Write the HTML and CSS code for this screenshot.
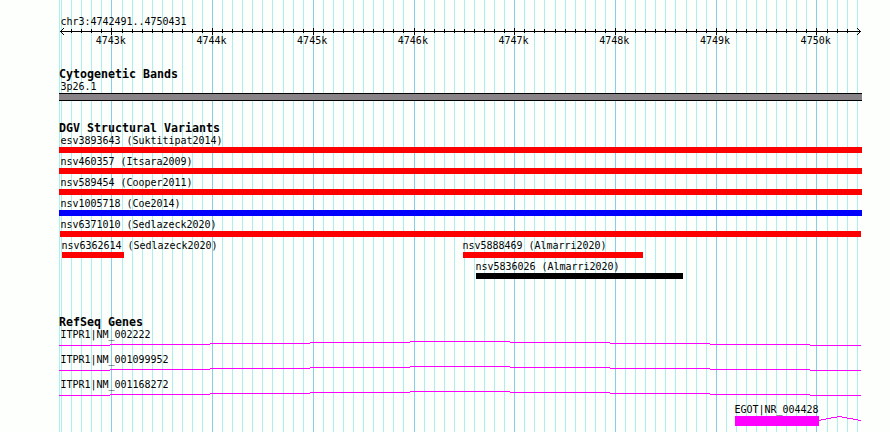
FILE: index.html
```
<!DOCTYPE html>
<html lang="en">
<head>
  <meta charset="UTF-8">
  <title>chr3:4742491..4750431</title>
  <link rel="stylesheet" href="styles.css">
</head>
<body>

  <div class="browser">
    <!-- grid lines, every 100 bp and every 1 kb -->
    <svg class="grid" width="890" height="432" shape-rendering="crispEdges">
      <path class="minor" d="M59 216H60M61 216H112M122 216H273M283 216H404M414 216H545M555 216H676M686 216H817M827 216H858"/>
      <path class="major" d="M111.5 0V432M212.5 0V432M313.5 0V432M414.5 0V432M514.5 0V432M615.5 0V432M716.5 0V432M816.5 0V432"/>
    </svg>

    <div class="content">
      <div class="label">chr3:4742491..4750431</div>
      <svg class="ruler" viewBox="59 28 803 7" width="803" height="7" shape-rendering="crispEdges">
        <path class="axis" d="M60 31.5H861M111.5 28V35M212.5 28V35M313.5 28V35M414.5 28V35M514.5 28V35M615.5 28V35M716.5 28V35M816.5 28V35"/>
        <path class="ticks" d="M71 31H112M122 31H273M283 31H404M414 31H545M555 31H676M686 31H817M827 31H848"/>
        <path class="arrow" d="M61 30h1v1h-1zM62 29h1v1h-1zM63 28h1v1h-1zM61 32h1v1h-1zM62 33h1v1h-1zM63 34h1v1h-1zM859 30h1v1h-1zM858 29h1v1h-1zM857 28h1v1h-1zM859 32h1v1h-1zM858 33h1v1h-1zM857 34h1v1h-1z"/>
      </svg>
      <div class="scale">
        <span>4743k</span>
        <span>4744k</span>
        <span>4745k</span>
        <span>4746k</span>
        <span>4747k</span>
        <span>4748k</span>
        <span>4749k</span>
        <span>4750k</span>
      </div>

      <h2>Cytogenetic Bands</h2>
      <div class="label">3p26.1</div>
      <div class="band"></div>

      <h2>DGV Structural Variants</h2>
      <div class="variant">
        <div class="label">esv3893643 (Suktitipat2014)</div>
        <div class="bar loss"></div>
      </div>
      <div class="variant">
        <div class="label">nsv460357 (Itsara2009)</div>
        <div class="bar loss"></div>
      </div>
      <div class="variant">
        <div class="label">nsv589454 (Cooper2011)</div>
        <div class="bar loss"></div>
      </div>
      <div class="variant">
        <div class="label">nsv1005718 (Coe2014)</div>
        <div class="bar gain"></div>
      </div>
      <div class="variant">
        <div class="label">nsv6371010 (Sedlazeck2020)</div>
        <div class="bar loss inset"></div>
      </div>
      <div class="lane">
        <div class="variant short first">
          <div class="label">nsv6362614 (Sedlazeck2020)</div>
          <div class="bar loss" style="width: 62px"></div>
        </div>
        <div class="variant short">
          <div class="label">nsv5888469 (Almarri2020)</div>
          <div class="bar loss" style="width: 180px"></div>
        </div>
      </div>
      <div class="lane">
        <div class="variant short last">
          <div class="label">nsv5836026 (Almarri2020)</div>
          <div class="bar other" style="width: 207px"></div>
        </div>
      </div>

      <h2 class="genes-title">RefSeq Genes</h2>
      <div class="gene">
        <div class="label">ITPR1|NM_002222</div>
        <svg viewBox="59 341 803 5" width="803" height="5" shape-rendering="crispEdges">
          <path class="intron" d="M59 345.5H110M110 344.5H210M210 343.5H310M310 342.5H410M410 341.5H510M510 342.5H610M610 343.5H710M710 344.5H810M810 345.5H861"/>
        </svg>
      </div>
      <div class="gene">
        <div class="label">ITPR1|NM_001099952</div>
        <svg viewBox="59 341 803 5" width="803" height="5" shape-rendering="crispEdges">
          <path class="intron" d="M59 345.5H110M110 344.5H210M210 343.5H310M310 342.5H410M410 341.5H510M510 342.5H610M610 343.5H710M710 344.5H810M810 345.5H861"/>
        </svg>
      </div>
      <div class="gene">
        <div class="label">ITPR1|NM_001168272</div>
        <svg viewBox="59 341 803 5" width="803" height="5" shape-rendering="crispEdges">
          <path class="intron" d="M59 345.5H110M110 344.5H210M210 343.5H310M310 342.5H410M410 341.5H510M510 342.5H610M610 343.5H710M710 344.5H810M810 345.5H861"/>
        </svg>
      </div>
      <div class="gene egot">
        <div class="label">EGOT|NR_004428</div>
        <div class="model">
          <div class="exon"></div>
          <svg viewBox="819 416 42 10" width="42" height="10" shape-rendering="crispEdges">
            <path class="intron" d="M819 420.5H821M821 419.5H826M826 418.5H831M831 417.5H837M837 416.5H842M842 417.5H847M847 418.5H853M853 419.5H858M858 420.5H861"/>
          </svg>
        </div>
      </div>
    </div>
  </div>

</body>
</html>
```
FILE: styles.css
```
body {
  margin: 0;
  background-color: #fdfffc;
  color: #000;
  font-family: "DejaVu Sans Mono", "Liberation Mono", monospace;
  font-size: 10px;
}
svg {
  display: block;
}
.browser {
  position: relative;
  width: 890px;
  height: 432px;
  overflow: hidden;
}
.grid {
  position: absolute;
  top: 0;
  left: 0;
}
.minor {
  stroke: #afeeee;
  stroke-width: 432;
  stroke-dasharray: 1 9;
}
.major {
  stroke: #87ceeb;
}
.content {
  position: relative;
  width: 803px;
  padding: 16px 0 0 59px;
}
.label {
  height: 12px;
  padding-left: 1.6px;
  line-height: 12px;
  letter-spacing: -0.02px;
  white-space: nowrap;
}
h2 {
  height: 14px;
  margin: 20px 0 0;
  font-size: 11.63px;
  line-height: 14px;
  white-space: nowrap;
}

/* ruler */
.axis {
  stroke: #000;
}
.ticks {
  stroke: #000;
  stroke-width: 4;
  stroke-dasharray: 1 9;
}
.arrow {
  fill: #000;
}
.scale {
  display: flex;
  height: 12px;
  padding-left: 1.4px;
  line-height: 12px;
}
.scale span {
  flex: 0 0 100.71px;
  text-align: center;
}

.band {
  box-sizing: border-box;
  height: 8px;
  background-color: #878387;
  border-top: 1px solid #000;
  border-bottom: 1px solid #000;
}

/* structural variants */
.variant {
  height: 21px;
}
.bar {
  height: 6px;
}
.loss {
  background-color: #f00;
}
.gain {
  background-color: #00f;
}
.other {
  background-color: #000;
}
.inset {
  margin: 0 1px;
}
.lane {
  display: flex;
}
.short .label {
  padding-left: 0;
  margin-left: -0.5px;
}
.first {
  width: 401px;
  margin-left: 3px;
}
.last {
  margin-left: 417px;
}

/* genes */
.genes-title {
  margin-top: 33px;
}
.gene {
  height: 25px;
}
.intron {
  fill: none;
  stroke: #f0f;
}
.egot {
  margin-left: 676px;
}
.egot .label {
  padding-left: 0;
  margin-left: -0.6px;
}
.model {
  display: flex;
}
.exon {
  width: 84px;
  height: 10px;
  background-color: #f0f;
}
```
